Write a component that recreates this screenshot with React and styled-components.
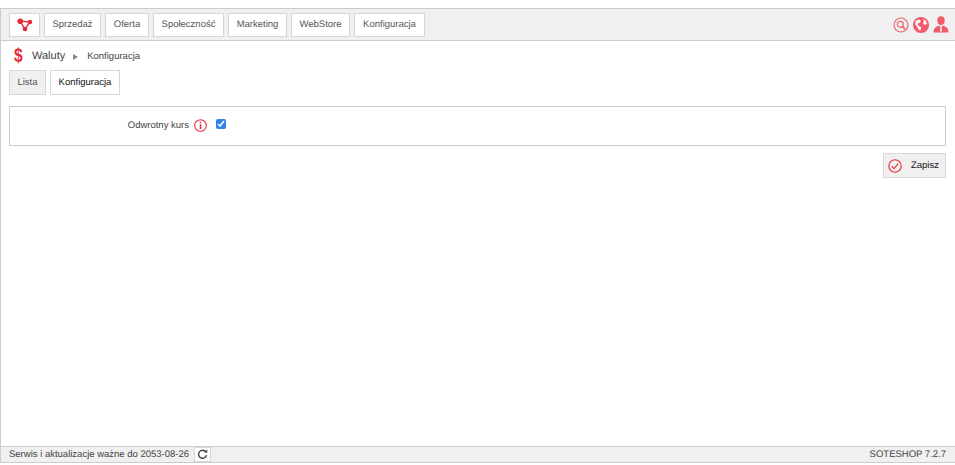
import styled, { createGlobalStyle } from "styled-components";

const Global = createGlobalStyle`
  html, body { margin: 0; padding: 0; background: #fff; }
  body {
    font-family: "Liberation Sans", Arial, sans-serif;
    font-size: 9.5px;
    color: #444;
    text-rendering: geometricPrecision;
  }
`;

const RED = "#e9283a";

const Page = styled.div`
  width: 955px;
  height: 465px;
  box-sizing: border-box;
  padding: 8px 0 2px;
  display: flex;
  flex-direction: column;
`;
const Frame = styled.div`
  flex: 1;
  display: flex;
  flex-direction: column;
  border-left: 1px solid #ccc;
  border-top: 1px solid #ccc;
`;
const Header = styled.header`
  height: 32px;
  box-sizing: border-box;
  flex: none;
  background: #f0f0f0;
  border-bottom: 1px solid #ccc;
  display: flex;
  align-items: center;
  padding: 0 6px 0 8px;
`;
const Nav = styled.nav`
  display: flex;
  gap: 4px;
`;
const NavButton = styled.div`
  width: ${(p) => p.$w}px;
  height: 24px;
  box-sizing: border-box;
  background: #fff;
  border: 1px solid #d6d6d6;
  display: flex;
  align-items: center;
  justify-content: center;
  color: #555;
`;
const Tools = styled.div`
  margin-left: auto;
  display: flex;
  align-items: center;
  gap: 4px;
`;
const Main = styled.main`
  flex: 1;
  display: flex;
  flex-direction: column;
  padding: 0 9px 0 8px;
`;
const Crumbs = styled.div`
  height: 29px;
  display: flex;
  align-items: center;
  padding-left: 5px;
  padding-top: 1px;
  box-sizing: border-box;
`;
const Dollar = styled.span`
  color: ${RED};
  font-size: 20px;
  font-weight: 700;
  width: 18px;
  transform: scaleX(0.78);
  transform-origin: left center;
`;
const CrumbTitle = styled.span`
  font-size: 11px;
  color: #444;
`;
const CrumbArrow = styled.span`
  width: 0;
  height: 0;
  margin: 1px 9px 0 8px;
  border-left: 5px solid #888;
  border-top: 3px solid transparent;
  border-bottom: 3px solid transparent;
`;
const CrumbText = styled.span`
  color: #444;
`;
const Tabs = styled.div`
  display: flex;
  gap: 4px;
`;
const Tab = styled.div`
  height: 25px;
  width: ${(p) => p.$w}px;
  box-sizing: border-box;
  border: 1px solid #d8d8d8;
  background: ${(p) => (p.$active ? "#fff" : "#f0f0f0")};
  color: ${(p) => (p.$active ? "#111" : "#555")};
  display: flex;
  align-items: center;
  justify-content: center;
`;
const Panel = styled.section`
  margin-top: 11px;
  height: 40px;
  box-sizing: border-box;
  border: 1px solid #ccc;
  display: flex;
  align-items: flex-start;
  padding-top: 12px;
`;
const FieldLabel = styled.label`
  width: 197px;
  display: flex;
  align-items: center;
  justify-content: flex-end;
  gap: 5px;
  color: #444;
  margin-top: 0;
`;
const Check = styled.input`
  margin: 0 0 0 9px;
  width: 10px;
  height: 10px;
  accent-color: #2c84ea;
`;
const Actions = styled.div`
  display: flex;
  justify-content: flex-end;
  margin-top: 7px;
`;
const SaveButton = styled.button`
  width: 63px;
  height: 25px;
  box-sizing: border-box;
  background: #f0f0f0;
  border: 1px solid #d8d8d8;
  padding: 0 0 0 4px;
  display: flex;
  align-items: center;
  gap: 9px;
  font-family: inherit;
  font-size: 9.5px;
  font-weight: 400;
  text-rendering: geometricPrecision;
  color: #111;
`;
const Footer = styled.footer`
  height: 17px;
  flex: none;
  box-sizing: border-box;
  background: #f0f0f0;
  border-top: 1px solid #ccc;
  border-bottom: 1px solid #ccc;
  display: flex;
  align-items: center;
  padding: 0 9px 0 8px;
  color: #444;
`;
const Refresh = styled.span`
  width: 17px;
  height: 15px;
  box-sizing: border-box;
  margin-left: 5px;
  background: #fff;
  border: 1px solid #d8d8d8;
  display: flex;
  align-items: center;
  justify-content: center;
`;
const Version = styled.span`
  margin-left: auto;
`;

const Logo = () => (
  <svg width="16" height="14" viewBox="0 0 16 14">
    <g stroke={RED} strokeWidth="1.4" fill="none">
      <path d="M3 3 L13 4 L8 11 Z" />
    </g>
    <circle cx="3.2" cy="3.2" r="2.8" fill={RED} />
    <circle cx="13" cy="4" r="2.2" fill={RED} />
    <circle cx="8" cy="11" r="2.3" fill={RED} />
  </svg>
);

const SearchIcon = () => (
  <svg width="16" height="16" viewBox="0 0 16 16" fill="none" stroke="#ef6470">
    <circle cx="8" cy="8" r="7" strokeWidth="1.2" />
    <circle cx="7.3" cy="7.3" r="3" strokeWidth="1.2" />
    <path d="M9.6 9.6 L12 12" strokeWidth="1.8" />
  </svg>
);

const GlobeIcon = () => (
  <svg width="16" height="16" viewBox="0 0 16 16">
    <circle cx="8" cy="8" r="8" fill="#ef5b68" />
    <path d="M3 3.5 L6.5 2.5 L8 4 L6.5 6 L4.5 6.5 L5.5 9 L8 10 L7.5 13.5 L6 13 L4 9.5 L2 7 Z" fill="#fff" />
    <path d="M10 2 L13 4 L14 7 L11.5 8 L10 6 L11 4.5 Z" fill="#fff" />
  </svg>
);

const UserIcon = () => (
  <svg width="16" height="17" viewBox="0 0 16 17">
    <ellipse cx="8" cy="4.6" rx="3.7" ry="4.4" fill="#ef5b68" />
    <path d="M0.5 16.5 C0.5 12 3 10.5 6 9.8 L8 11 L10 9.8 C13 10.5 15.5 12 15.5 16.5 Z" fill="#ef5b68" />
    <path d="M7.4 11 H8.6 L8.9 15.5 H7.1 Z" fill="#fff" />
  </svg>
);

const InfoIcon = () => (
  <svg width="13" height="13" viewBox="0 0 13 13" fill="none" stroke={RED}>
    <circle cx="6.5" cy="6.5" r="5.8" strokeWidth="1.1" />
    <path d="M6.5 2.8 V4.2" strokeWidth="1.5" />
    <path d="M6.5 5.2 V10" strokeWidth="1.5" />
  </svg>
);

const SaveIcon = () => (
  <svg width="14" height="14" viewBox="0 0 14 14" fill="none" stroke={RED} strokeWidth="1.1">
    <circle cx="7" cy="7" r="6.2" />
    <path d="M3.8 7.2 L6 9.6 L10.2 4.6" />
  </svg>
);

const RefreshIcon = () => (
  <svg width="11" height="11" viewBox="0 0 11 11" fill="none">
    <path d="M8.9 3 A4 4 0 1 0 9.5 6.2" stroke="#444" strokeWidth="1.4" />
    <path d="M7 3.6 H10.4 V0.6 Z" fill="#444" />
  </svg>
);

const navItems = [
  ["Sprzedaż", 57],
  ["Oferta", 44],
  ["Społeczność", 71],
  ["Marketing", 59],
  ["WebStore", 59],
  ["Konfiguracja", 71],
];

export default function App() {
  return (
    <Page>
      <Global />
      <Frame>
        <Header>
          <Nav>
            <NavButton $w={31}>
              <Logo />
            </NavButton>
            {navItems.map(([label, w]) => (
              <NavButton key={label} $w={w}>
                {label}
              </NavButton>
            ))}
          </Nav>
          <Tools>
            <SearchIcon />
            <GlobeIcon />
            <UserIcon />
          </Tools>
        </Header>
        <Main>
          <Crumbs>
            <Dollar>$</Dollar>
            <CrumbTitle>Waluty</CrumbTitle>
            <CrumbArrow />
            <CrumbText>Konfiguracja</CrumbText>
          </Crumbs>
          <Tabs>
            <Tab $w={37}>Lista</Tab>
            <Tab $w={70} $active>
              Konfiguracja
            </Tab>
          </Tabs>
          <Panel>
            <FieldLabel>
              Odwrotny kurs
              <InfoIcon />
            </FieldLabel>
            <Check type="checkbox" defaultChecked />
          </Panel>
          <Actions>
            <SaveButton>
              <SaveIcon />
              Zapisz
            </SaveButton>
          </Actions>
        </Main>
        <Footer>
          Serwis i aktualizacje ważne do 2053-08-26
          <Refresh>
            <RefreshIcon />
          </Refresh>
          <Version>SOTESHOP 7.2.7</Version>
        </Footer>
      </Frame>
    </Page>
  );
}
